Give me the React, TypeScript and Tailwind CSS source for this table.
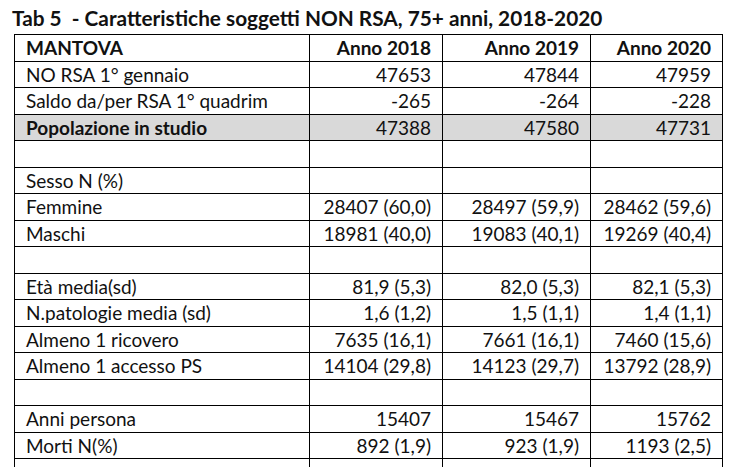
import React from "react";

type Row = { label: string; v: [string, string, string]; bold?: boolean; gray?: boolean };

const rows: Row[] = [
  { label: "MANTOVA", v: ["Anno 2018", "Anno 2019", "Anno 2020"], bold: true },
  { label: "NO RSA 1° gennaio", v: ["47653", "47844", "47959"] },
  { label: "Saldo da/per RSA 1° quadrim", v: ["-265", "-264", "-228"] },
  { label: "Popolazione in studio", v: ["47388", "47580", "47731"], gray: true },
  { label: "", v: ["", "", ""] },
  { label: "Sesso N (%)", v: ["", "", ""] },
  { label: "Femmine", v: ["28407 (60,0)", "28497 (59,9)", "28462 (59,6)"] },
  { label: "Maschi", v: ["18981 (40,0)", "19083 (40,1)", "19269 (40,4)"] },
  { label: "", v: ["", "", ""] },
  { label: "Età media(sd)", v: ["81,9 (5,3)", "82,0 (5,3)", "82,1 (5,3)"] },
  { label: "N.patologie media (sd)", v: ["1,6 (1,2)", "1,5 (1,1)", "1,4 (1,1)"] },
  { label: "Almeno 1 ricovero", v: ["7635 (16,1)", "7661 (16,1)", "7460 (15,6)"] },
  { label: "Almeno 1 accesso PS", v: ["14104 (29,8)", "14123 (29,7)", "13792 (28,9)"] },
  { label: "", v: ["", "", ""] },
  { label: "Anni persona", v: ["15407", "15467", "15762"] },
  { label: "Morti N(%)", v: ["892 (1,9)", "923 (1,9)", "1193 (2,5)"] },
  { label: "", v: ["", "", ""] },
];

export default function App() {
  return (
    <div
      className="w-[733px] h-[467px] overflow-hidden bg-white text-[#111]"
      style={{ fontFamily: "Lato, 'Liberation Sans', sans-serif" }}
    >
      <div className="pl-[12px] pt-[5px] h-[34px] text-[20.8px] font-bold leading-[26px] whitespace-pre">
        {"Tab 5  - Caratteristiche soggetti NON RSA, 75+ anni, 2018-2020"}
      </div>
      <div className="ml-[14px] w-[709px] border-t border-l border-black">
        {rows.map((r, i) => (
          <div
            key={i}
            className={`grid grid-cols-[295px_133px_148px_132px] h-[26.5px] border-b border-black text-[19px] leading-[26px] ${
              r.gray ? "bg-[#d9d9d9]" : ""
            } ${r.bold ? "font-bold" : ""}`}
          >
            <div className={`border-r border-black pl-[11px] whitespace-nowrap ${r.gray ? "font-bold" : ""}`}>
              {r.label}
            </div>
            {r.v.map((c, j) => (
              <div key={j} className="border-r border-black pr-[11px] text-right whitespace-nowrap">
                {c}
              </div>
            ))}
          </div>
        ))}
      </div>
    </div>
  );
}
